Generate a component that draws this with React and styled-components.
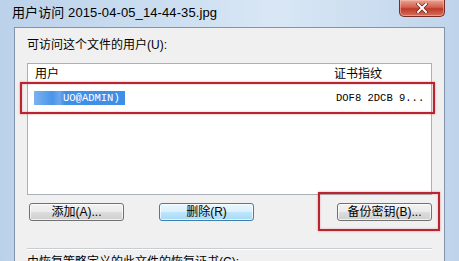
import React from 'react'
import styled, { createGlobalStyle } from 'styled-components'

const GlobalStyle = createGlobalStyle`
  html, body {
    margin: 0;
    padding: 0;
    background: #c3d7ec;
  }
  body {
    font-family: "Liberation Sans", "Noto Sans CJK SC", sans-serif;
  }
`

const Window = styled.div`
  width: 459px;
  height: 261px;
  overflow: hidden;
  position: relative;
  display: flex;
  flex-direction: column;
  background: linear-gradient(to right, #bcd2ea 0%, #cddff1 40%, #d9e7f5 60%, #bfd4eb 100%);
`

const TitleBar = styled.div`
  height: 27px;
  flex: none;
  display: flex;
  align-items: flex-start;
  justify-content: space-between;
  padding: 0 14px 0 12px;
`

const Title = styled.div`
  font-size: 13px;
  color: #000;
  line-height: 26px;
  letter-spacing: 0.1px;
`

const CloseButton = styled.div`
  width: 46px;
  height: 17px;
  border: 1px solid #7a2a24;
  border-top: none;
  border-radius: 0 0 5px 5px;
  background: linear-gradient(to bottom, #e8a594 0%, #d2614c 45%, #c0392a 55%, #d4705a 100%);
  box-sizing: border-box;
  display: flex;
  align-items: center;
  justify-content: center;
  box-shadow: inset 0 0 0 1px rgba(255, 200, 190, 0.5);
`

const Body = styled.div`
  flex: 1;
  display: flex;
  padding: 0 14px 0 14px;
`

const Client = styled.div`
  flex: 1;
  background: #f0f0f0;
  border-top: 1px solid #8194ab;
  border-left: 1px solid #8194ab;
  border-right: 1px solid #8194ab;
  padding: 9px 12px 0 12px;
  display: flex;
  flex-direction: column;
`

const Label = styled.div`
  font-size: 12px;
  color: #000;
  line-height: 16px;
  height: 26px;
`

const ListBox = styled.div`
  height: 132px;
  background: #fff;
  border: 1px solid #a9b0b8;
  box-sizing: border-box;
  display: flex;
  flex-direction: column;
`

const HeaderRow = styled.div`
  height: 22px;
  display: grid;
  grid-template-columns: 299px 1fr;
  font-size: 12px;
  line-height: 20px;
  padding-left: 7px;
`

const DataRow = styled.div`
  height: 17px;
  margin-top: 3px;
  display: grid;
  grid-template-columns: 299px 1fr;
  align-items: center;
  padding-left: 6px;
`

const Selected = styled.div`
  justify-self: start;
  width: 91px;
  height: 14px;
  box-sizing: border-box;
  padding-left: 29px;
  background: linear-gradient(to right, #7cb2ee 0%, #4a95ea 20%, #6ea6ea 28%, #3d8fe8 34%, #3d8fe8 100%);
  color: #fff;
  font-family: "Liberation Mono", monospace;
  font-size: 10.5px;
  line-height: 14px;
`

const Thumb = styled.div`
  font-family: "Liberation Mono", monospace;
  font-size: 10.5px;
  color: #000;
  padding-left: 3px;
`

const ButtonRow = styled.div`
  display: flex;
  align-items: center;
  margin-top: 8px;
  padding-left: 2px;
`

const Button = styled.div`
  width: ${p => p.$w || 95}px;
  height: 18px;
  box-sizing: border-box;
  margin-left: ${p => p.$ml || 0}px;
  border: 1px solid ${p => (p.$hot ? '#3c7fb1' : '#707070')};
  border-radius: 3px;
  background: ${p =>
    p.$hot
      ? 'linear-gradient(to bottom, #eaf6fd 0%, #d9f0fc 50%, #bee6fd 51%, #a7d9f5 100%)'
      : 'linear-gradient(to bottom, #f2f2f2 0%, #ebebeb 50%, #dddddd 51%, #cfcfcf 100%)'};
  box-shadow: inset 0 0 0 1px rgba(255, 255, 255, 0.7);
  font-size: 12px;
  line-height: 16px;
  text-align: center;
  color: #000;
`

const Spacer = styled.div`
  flex: 1;
`

const Separator = styled.div`
  height: 0;
  margin-top: 27px;
  border-top: 1px solid #c8cdd2;
  border-bottom: 1px solid #ffffff;
`

const Footer = styled.div`
  font-size: 12px;
  line-height: 16px;
  margin-top: 4px;
`

const Mark = styled.div`
  position: absolute;
  border: 2px solid #b82430;
  box-shadow: 0 0 2px rgba(200, 40, 50, 0.5), inset 0 0 2px rgba(200, 40, 50, 0.4);
`

export default function App() {
  return (
    <>
      <GlobalStyle />
      <Window>
        <TitleBar>
          <Title>用户访问 2015-04-05_14-44-35.jpg</Title>
          <CloseButton>
            <svg width="12" height="10" viewBox="0 0 12 10">
              <path d="M2 1 L10 9 M10 1 L2 9" stroke="#5a1a14" strokeWidth="3.2" strokeLinecap="square" />
              <path d="M2 1 L10 9 M10 1 L2 9" stroke="#ffffff" strokeWidth="2" strokeLinecap="square" />
            </svg>
          </CloseButton>
        </TitleBar>
        <Body>
          <Client>
            <Label>可访问这个文件的用户(U):</Label>
            <ListBox>
              <HeaderRow>
                <span>用户</span>
                <span>证书指纹</span>
              </HeaderRow>
              <DataRow>
                <Selected>UO@ADMIN)</Selected>
                <Thumb>DOF8 2DCB 9...</Thumb>
              </DataRow>
            </ListBox>
            <ButtonRow>
              <Button>添加(A)...</Button>
              <Button $ml={35} $hot>删除(R)</Button>
              <Spacer />
              <Button>备份密钥(B)...</Button>
            </ButtonRow>
            <Separator />
            <Footer>由恢复策略定义的此文件的恢复证书(C):</Footer>
          </Client>
        </Body>
        <Mark style={{ left: 20, top: 82, width: 411, height: 28 }} />
        <Mark style={{ left: 318, top: 192, width: 118, height: 35 }} />
      </Window>
    </>
  )
}
